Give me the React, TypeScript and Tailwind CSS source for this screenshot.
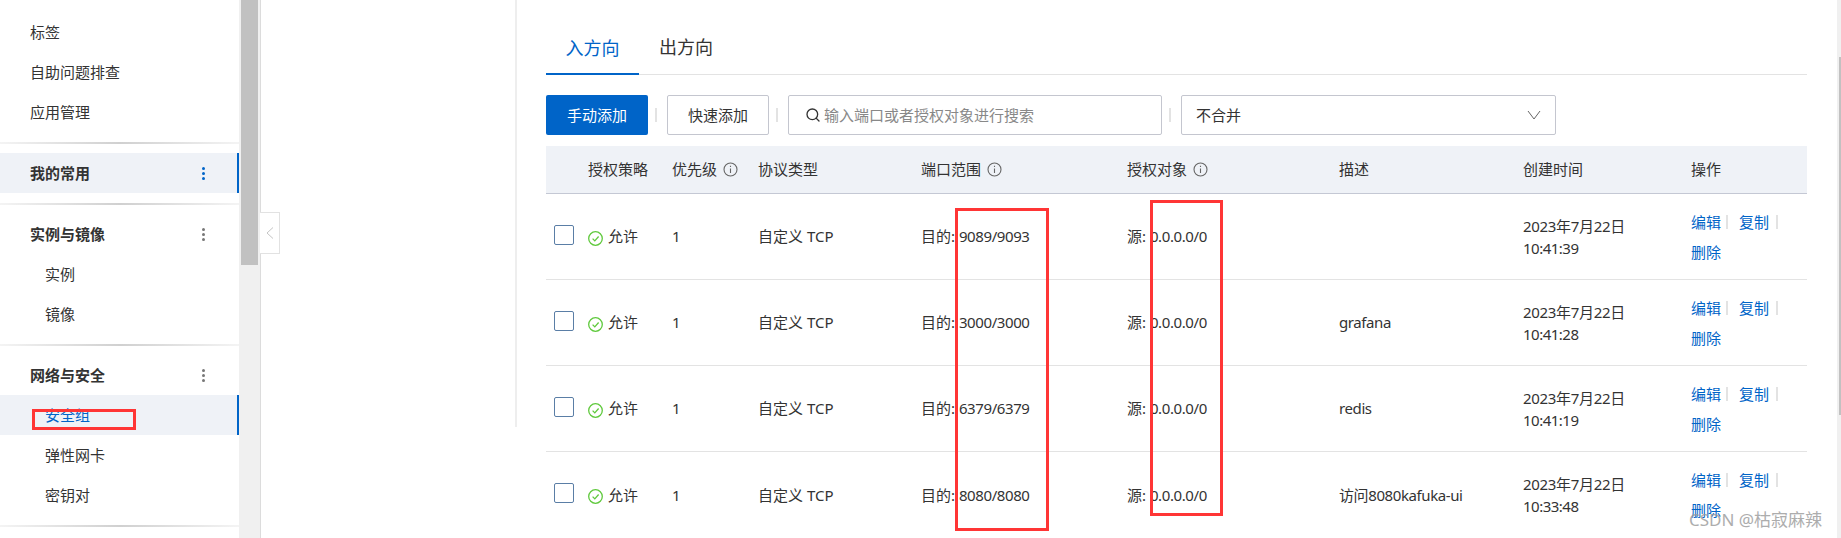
import React from 'react';
import { Search } from 'lucide-react';

const font = "font-['Noto_Sans','Noto_Sans_CJK_SC',sans-serif]";
const cols = 'grid grid-cols-[42px_84px_86px_163px_206px_212px_184px_168px_1fr]';

const rules = [
  { port: '9089/9093', desc: '', time: '10:41:39' },
  { port: '3000/3000', desc: 'grafana', time: '10:41:28' },
  { port: '6379/6379', desc: 'redis', time: '10:41:19' },
  { port: '8080/8080', desc: '访问8080kafuka-ui', time: '10:33:48' },
];

const Divider = () => (
  <div className="h-[2px] mt-[10px] mb-[9px] bg-linear-to-r from-[#f4f4f4] via-[#d0d0d0] to-[#f4f4f4]" />
);

const Dots = ({ className }: { className: string }) => (
  <svg width="3" height="13" viewBox="0 0 3 13" fill="currentColor" className={className}>
    <circle cx="1.5" cy="1.5" r="1.5" />
    <circle cx="1.5" cy="6.5" r="1.5" />
    <circle cx="1.5" cy="11.5" r="1.5" />
  </svg>
);

const Item = ({ label, sub, bold, active, more }: { label: string; sub?: boolean; bold?: boolean; active?: boolean; more?: string }) => (
  <div className={`h-10 flex items-center justify-between text-[15px] ${sub ? 'pl-[45px]' : 'pl-[30px]'} ${bold ? 'font-bold' : ''} ${active ? 'pr-[32px] bg-[#eff2f7] border-r-2 border-[#0064c8]' : 'pr-[34px]'} ${active && sub ? 'text-[#0064c8]' : 'text-[#333]'}`}>
    <span>{label}</span>
    {more && <Dots className={more} />}
  </div>
);

const Info = () => (
  <svg width="15" height="15" viewBox="0 0 15 15" fill="none" stroke="#666" strokeWidth="1.1" className="ml-[6px]">
    <circle cx="7.5" cy="7.5" r="6.5" />
    <path d="M7.5 6.5v4.5M7.5 3.8v1.2" />
  </svg>
);

const Allowed = () => (
  <svg width="15" height="15" viewBox="0 0 15 15" fill="none" stroke="#5fc93c" strokeWidth="1.3" className="mt-[3px] shrink-0">
    <circle cx="7.5" cy="7.5" r="6.8" />
    <path d="M4.6 7.6l2.2 2.3 3.8-4.4" />
  </svg>
);

const ToolSep = () => <span className="w-[2px] h-[14px] bg-[#e3e3e3] ml-[7px] mr-[10px]" />;
const Sep = () => <span className="w-[2px] h-[14px] bg-[#e3e3e3] mx-[5px]" />;

const RedBox = ({ className }: { className: string }) => (
  <div className={`absolute border-[3px] border-[#ff3535] ${className}`} />
);

export default function App() {
  return (
    <div className={`relative flex w-[1841px] h-[538px] overflow-hidden bg-white ${font}`}>
      <aside className="w-[239px] shrink-0 pt-[12px]">
        <Item label="标签" />
        <Item label="自助问题排查" />
        <Item label="应用管理" />
        <Divider />
        <Item label="我的常用" bold active more="text-[#0064c8]" />
        <Divider />
        <Item label="实例与镜像" bold more="text-[#777]" />
        <Item label="实例" sub />
        <Item label="镜像" sub />
        <Divider />
        <Item label="网络与安全" bold more="text-[#777]" />
        <Item label="安全组" sub active />
        <Item label="弹性网卡" sub />
        <Item label="密钥对" sub />
        <Divider />
      </aside>

      <div className="w-[22px] shrink-0 bg-[#f0f0f0] border-r border-[#dcdcdc] pl-[2px]">
        <div className="w-[17px] h-[265px] bg-[#c1c1c1]" />
      </div>

      <div className="w-[256px] h-[427px] shrink-0 border-r-2 border-[#eeeeee]" />

      <main className="w-[1261px] ml-[29px] shrink-0 text-[15px] text-[#333]">
        <div className="flex h-[75px] items-end border-b border-[#e3e3e3] text-[18px]">
          <div className="w-[93px] h-[43px] pt-[3px] text-center text-[#0064c8] border-b-2 border-[#0064c8] -mb-px">入方向</div>
          <div className="ml-[20px] h-[43px] pt-[3px]">出方向</div>
        </div>

        <div className="flex items-center mt-5 h-10">
          <button className="w-[102px] h-10 rounded-[2px] bg-[#0064c8] text-white">手动添加</button>
          <ToolSep />
          <button className="w-[102px] h-10 rounded-[2px] border border-[#c4c6cf]">快速添加</button>
          <ToolSep />
          <div className="w-[374px] h-10 rounded-[2px] border border-[#c4c6cf] flex items-center pl-[16px] text-[#888]">
            <Search size={16} strokeWidth={2} className="text-[#333] mr-[3px]" />
            输入端口或者授权对象进行搜索
          </div>
          <ToolSep />
          <div className="w-[375px] h-10 rounded-[2px] border border-[#c4c6cf] flex items-center justify-between pl-[14px] pr-[14px]">
            不合并
            <svg width="14" height="10" viewBox="0 0 14 10" fill="none" stroke="#666">
              <path d="M1 1l6 8 6-8" />
            </svg>
          </div>
        </div>

        <div className={`${cols} mt-[11px] h-12 items-center bg-[#eff2f7] border-b border-[#c4c8d4]`}>
          <span />
          <span>授权策略</span>
          <span className="flex items-center">优先级<Info /></span>
          <span>协议类型</span>
          <span className="flex items-center">端口范围<Info /></span>
          <span className="flex items-center">授权对象<Info /></span>
          <span>描述</span>
          <span>创建时间</span>
          <span>操作</span>
        </div>

        {rules.map((r) => (
          <div key={r.port} className={`${cols} h-[86px] items-center border-b border-[#e3e3e3] last:border-b-0`}>
            <span className="w-5 h-5 ml-2 -mt-1 rounded-[2px] border border-[#5a7ea6]" />
            <span className="flex items-center gap-[5px]"><Allowed />允许</span>
            <span>1</span>
            <span>自定义 TCP</span>
            <span>目的: <span className="tracking-[-0.4px]">{r.port}</span></span>
            <span>源: <span className="tracking-[-0.4px]">0.0.0.0/0</span></span>
            <span className="tracking-[-0.4px]">{r.desc}</span>
            <span className="leading-[22px]">
              <span className="tracking-[-0.3px]">2023年7月22日</span><br />
              <span className="tracking-[-0.5px]">{r.time}</span>
            </span>
            <div className="text-[#0064c8] leading-[30px]">
              <div className="flex items-center">
                编辑<Sep /><span className="ml-[6px]">复制</span>
                <span className="ml-[2px] flex items-center"><Sep /></span>
              </div>
              <div>删除</div>
            </div>
          </div>
        ))}
      </main>

      {/* page scrollbar on the far right */}
      <div className="ml-auto w-[4px] shrink-0 bg-[#f0f0f0] pt-[57px] flex justify-end">
        <div className="w-[2px] h-[358px] bg-[#c1c1c1]" />
      </div>

      <div className="absolute left-[260px] top-[212px] w-[20px] h-[42px] bg-white border border-l-0 border-[#e2e2e2] flex items-center justify-center">
        <svg width="8" height="12" viewBox="0 0 8 12" fill="none" stroke="#c4c4c4">
          <path d="M7 .5L1 6l6 5.5" />
        </svg>
      </div>

      <RedBox className="left-[32px] top-[409px] w-[104px] h-[21px]" />
      <RedBox className="left-[955px] top-[208px] w-[94px] h-[323px]" />
      <RedBox className="left-[1150px] top-[200px] w-[73px] h-[316px]" />

      <div className="absolute left-[1689px] top-[507px] text-[17px] text-[#999] opacity-80">CSDN @枯寂麻辣</div>
    </div>
  );
}
